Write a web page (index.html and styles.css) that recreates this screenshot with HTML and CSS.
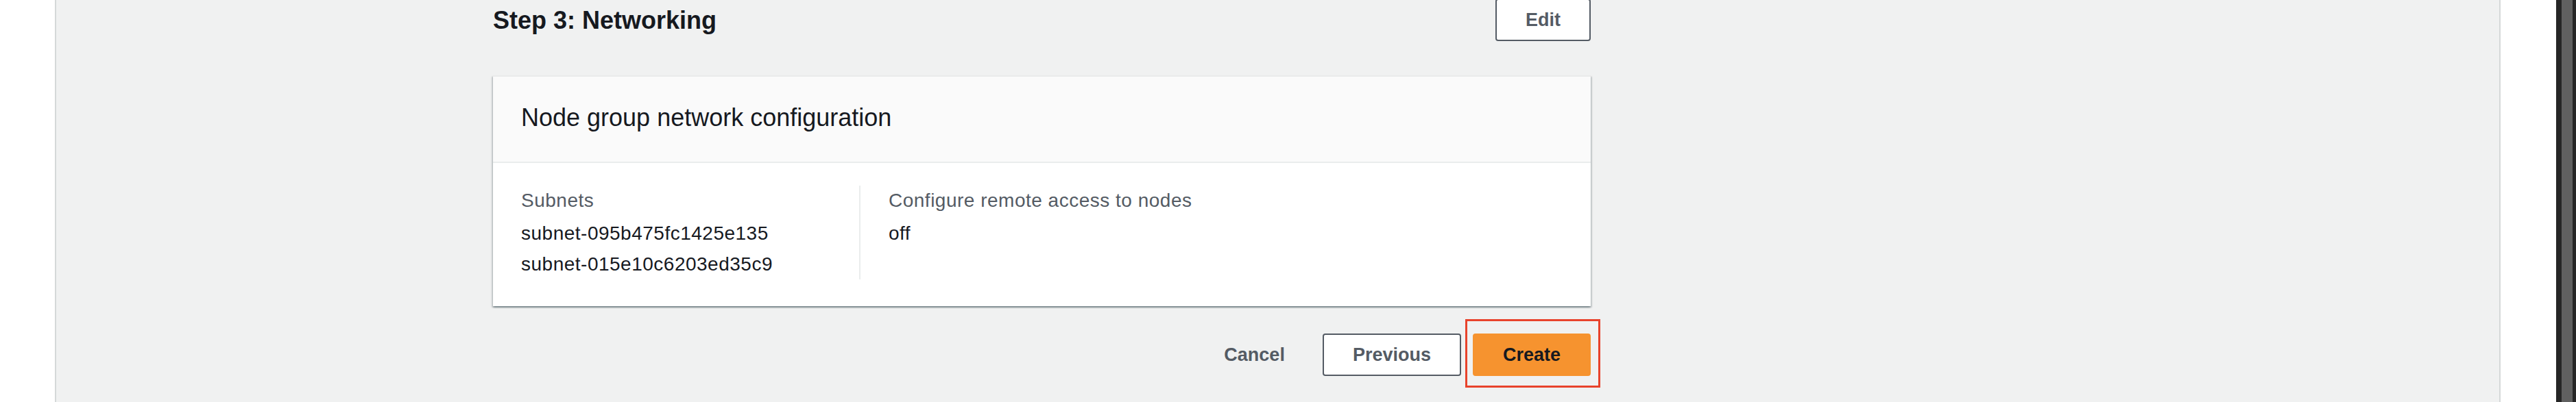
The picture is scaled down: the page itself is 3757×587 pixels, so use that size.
FILE: index.html
```html
<!DOCTYPE html>
<html lang="en">
<head>
    <meta charset="UTF-8">
    <meta name="viewport" content="width=device-width, initial-scale=1.0">
    <title>Review and create - Node group</title>
    <link rel="stylesheet" href="styles.css">
</head>
<body>
    <div class="side-gutter"></div>
    <main class="content">
        <div class="wizard">
            <div class="step-header">
                <h2>Step 3: Networking</h2>
                <button class="btn btn-normal">Edit</button>
            </div>

            <div class="card">
                <div class="card-header">
                    <h3>Node group network configuration</h3>
                </div>
                <div class="card-body">
                    <div class="column">
                        <div class="label">Subnets</div>
                        <div class="value">subnet-095b475fc1425e135</div>
                        <div class="value">subnet-015e10c6203ed35c9</div>
                    </div>
                    <div class="column column-divided">
                        <div class="label">Configure remote access to nodes</div>
                        <div class="value">off</div>
                    </div>
                </div>
            </div>

            <div class="actions">
                <button class="btn btn-link">Cancel</button>
                <button class="btn btn-normal">Previous</button>
                <span class="highlight-wrap">
                    <button class="btn btn-primary">Create</button>
                    <span class="highlight"></span>
                </span>
            </div>
        </div>
    </main>
    <div class="side-gutter side-gutter-right"></div>
    <div class="scrollbar"><div class="scrollbar-thumb"></div></div>
</body>
</html>
```

FILE: styles.css
```css
body {
    margin: 0;
    height: 587px;
    overflow: hidden;
    display: flex;
    font-family: "Liberation Sans", Arial, sans-serif;
    color: #16191f;
    background-color: #ffffff;
}
.side-gutter {
    width: 80px;
    flex-shrink: 0;
    background-color: #ffffff;
}
.side-gutter-right {
    width: 81px;
}
.content {
    flex: 1;
    background-color: #f0f1f1;
    border-left: 2px solid #d5d9d9;
    border-right: 2px solid #d5d9d9;
    padding-left: 637px;
}
.scrollbar {
    width: 29px;
    flex-shrink: 0;
    background-color: #262626;
    padding-left: 8px;
    box-sizing: border-box;
}
.scrollbar-thumb {
    width: 16px;
    height: 100%;
    background-color: #606060;
}
.wizard {
    width: 1601px;
    margin-top: -2px;
}
.step-header {
    display: flex;
    justify-content: space-between;
    align-items: center;
    height: 62px;
}
h2 {
    margin: 0;
    font-size: 36px;
    line-height: 44px;
    font-weight: bold;
    padding-top: 2px;
}
.btn {
    font-family: "Liberation Sans", Arial, sans-serif;
    font-size: 27px;
    font-weight: bold;
    height: 62px;
    padding: 0 42px;
    border: 2px solid transparent;
    border-radius: 4px;
    background: none;
    cursor: pointer;
}
.btn-normal {
    background-color: #ffffff;
    border-color: #545b64;
    color: #545b64;
}
.btn-link {
    color: #545b64;
    padding: 0 40px 0 36px;
    margin-right: -4px;
}
.btn-primary {
    background-color: #f6932f;
    border-color: #f6932f;
    color: #16191f;
}
.card {
    margin-top: 50px;
    background-color: #ffffff;
    border-top: 2px solid #e9ebeb;
    box-shadow: 0 2px 2px 0 rgba(0, 28, 36, 0.3), 2px 2px 2px 0 rgba(0, 28, 36, 0.15), -2px 2px 2px 0 rgba(0, 28, 36, 0.15);
}
.card-header {
    background-color: #fafafa;
    border-bottom: 2px solid #eaeded;
    padding: 38px 41px 42px;
}
h3 {
    margin: 0;
    font-size: 36px;
    line-height: 44px;
    font-weight: normal;
}
.card-body {
    display: flex;
    padding: 33px 41px 39px;
}
.column {
    width: 493px;
    font-size: 28px;
    letter-spacing: 0.5px;
}
.column-divided {
    border-left: 2px solid #eaeded;
    padding-left: 41px;
}
.label {
    color: #545b64;
    line-height: 44px;
    margin-bottom: 3px;
}
.value {
    line-height: 45px;
}
.actions {
    display: flex;
    justify-content: flex-end;
    align-items: center;
    gap: 17px;
    margin-top: 40px;
}
.highlight-wrap {
    position: relative;
    display: inline-flex;
}
.highlight {
    position: absolute;
    top: -21px;
    left: -11px;
    right: -14px;
    bottom: -17px;
    border: 3px solid #e8432c;
    pointer-events: none;
}
```
